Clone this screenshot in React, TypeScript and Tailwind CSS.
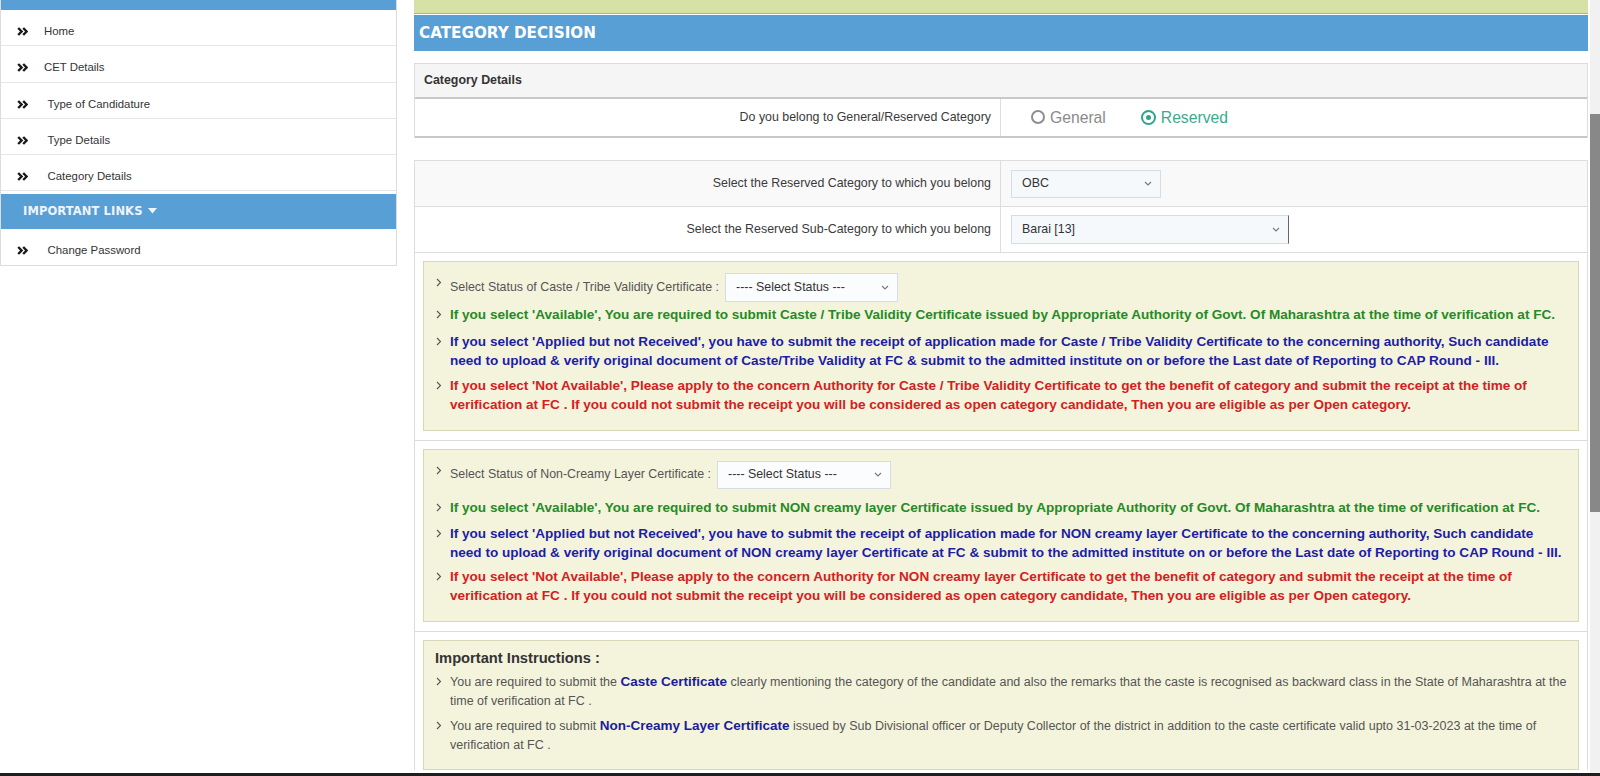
import React from "react";

function DoubleChevron() {
  return (
    <svg width="11" height="9" viewBox="0 0 11 9" className="shrink-0">
      <path d="M1.2 1 L4.6 4.5 L1.2 8 M6.2 1 L9.6 4.5 L6.2 8" fill="none" stroke="#1a1a1a" strokeWidth="2.4" />
    </svg>
  );
}

function SmallChevron() {
  return (
    <div className="h-[19.5px] w-[14px] shrink-0 flex items-center">
      <svg width="6" height="9" viewBox="0 0 6 9">
        <path d="M1 1 L4.5 4.5 L1 8" fill="none" stroke="#555" strokeWidth="1.1" />
      </svg>
    </div>
  );
}

function SelectBox({ value, className }: { value: string; className: string }) {
  return (
    <div
      className={`flex items-center justify-between border border-[#d8dde3] bg-[#f6f9fc] pl-[10px] pr-[8px] text-[12.4px] text-[#333] ${className}`}
    >
      <span>{value}</span>
      <svg width="8" height="5" viewBox="0 0 8 5">
        <path d="M1 1 L4 4 L7 1" fill="none" stroke="#777" strokeWidth="1.1" />
      </svg>
    </div>
  );
}

const menu = [
  { label: "Home", indent: "ml-[16px]" },
  { label: "CET Details", indent: "ml-[16px]" },
  { label: "Type of Candidature", indent: "ml-[19.5px]" },
  { label: "Type Details", indent: "ml-[19.5px]" },
  { label: "Category Details", indent: "ml-[19.5px]" },
];

function Sidebar() {
  return (
    <aside className="w-[397px] shrink-0 self-start border-x border-b border-[#dcdcdc] bg-white">
      <div className="h-[10px] bg-[#589fd5]" />
      {menu.map((m) => (
        <div key={m.label} className="h-[36.3px] flex items-center border-b border-[#e6e6e6] pl-[16px] pt-[8px]">
          <DoubleChevron />
          <span className={`${m.indent} text-[11.4px] text-[#333]`}>{m.label}</span>
        </div>
      ))}
      <div className="mt-[3px] h-[35px] bg-[#589fd5] flex items-center pl-[22px]">
        <span className="font-['DejaVu_Sans',Verdana,sans-serif] font-bold text-[11.5px] text-[#eef4fa] tracking-[0.1px]">
          IMPORTANT LINKS
        </span>
        <svg width="9" height="6" viewBox="0 0 9 6" className="ml-[5px] mb-[2px]">
          <path d="M0 0 L9 0 L4.5 5.5 Z" fill="#eef4fa" />
        </svg>
      </div>
      <div className="h-[36px] flex items-center pl-[16px] pt-[6px]">
        <DoubleChevron />
        <span className="ml-[19.5px] text-[11.4px] text-[#333]">Change Password</span>
      </div>
    </aside>
  );
}

function NoteGreen({ children, className = "" }: { children: React.ReactNode; className?: string }) {
  return (
    <div className={`flex items-start ${className}`}>
      <SmallChevron />
      <div className="font-bold text-[13.55px] leading-[19.5px] text-[#268a26] whitespace-nowrap">{children}</div>
    </div>
  );
}
function NoteBlue({ children, className = "" }: { children: React.ReactNode; className?: string }) {
  return (
    <div className={`flex items-start ${className}`}>
      <SmallChevron />
      <div className="font-bold text-[13.55px] leading-[19.5px] text-[#1d1da6] whitespace-nowrap">{children}</div>
    </div>
  );
}
function NoteRed({ children, className = "" }: { children: React.ReactNode; className?: string }) {
  return (
    <div className={`flex items-start ${className}`}>
      <SmallChevron />
      <div className="font-bold text-[13.55px] leading-[19.5px] text-[#d42020] whitespace-nowrap">{children}</div>
    </div>
  );
}

export default function App() {
  return (
    <div className="w-[1600px] h-[776px] overflow-hidden bg-white flex flex-col font-['Liberation_Sans',Arial,sans-serif]">
      <div className="h-[773px] flex overflow-hidden">
        <Sidebar />
        <main className="ml-[17px] w-[1174px] shrink-0 flex flex-col">
          <div className="h-[14px] shrink-0 bg-[#d6e2a5] border-b border-[#a9b96f]" />
          <div className="mt-[1px] h-[36px] shrink-0 bg-[#589fd5] flex items-center pl-[5px]">
            <span className="font-['DejaVu_Sans',Verdana,sans-serif] font-bold text-[15.2px] text-white">CATEGORY DECISION</span>
          </div>

          {/* Category details panel */}
          <div className="mt-[12px] shrink-0 border-x border-t border-[#dddddd]">
            <div className="h-[35px] bg-[#f5f5f5] border-b-2 border-[#c8c8c8] flex items-center pl-[9px]">
              <span className="font-bold text-[12.4px] text-[#333]">Category Details</span>
            </div>
            <div className="h-[39px] flex border-b-2 border-[#c8c8c8]">
              <div className="w-1/2 flex items-center justify-end pr-[9px] border-r border-[#dddddd] text-[12.4px] text-[#3a3a3a]">
                Do you belong to General/Reserved Category
              </div>
              <div className="flex-1 flex items-center pl-[30px]">
                <div className="flex items-center">
                  <span className="w-[14px] h-[14px] rounded-full border-2 border-[#8e8e8e] bg-white" />
                  <span className="ml-[5px] text-[15.7px] text-[#8a8a8a]">General</span>
                </div>
                <div className="flex items-center ml-[35px]">
                  <span className="w-[15px] h-[15px] rounded-full border-[2.5px] border-[#2ea58a] bg-white flex items-center justify-center">
                    <span className="w-[5px] h-[5px] rounded-full bg-[#2ea58a]" />
                  </span>
                  <span className="ml-[5px] text-[15.7px] text-[#3aab8e]">Reserved</span>
                </div>
              </div>
            </div>
          </div>

          {/* Reserved category table */}
          <div className="mt-[22px] shrink-0 border-x border-t border-[#dddddd]">
            <div className="h-[46px] flex bg-[#f9f9f9] border-b border-[#dddddd]">
              <div className="w-1/2 flex items-center justify-end pr-[9px] border-r border-[#dddddd] text-[12.4px] text-[#3a3a3a]">
                Select the Reserved Category to which you belong
              </div>
              <div className="flex-1 flex items-center pl-[10px]">
                <SelectBox value="OBC" className="w-[150px] h-[28px]" />
              </div>
            </div>
            <div className="h-[46px] flex bg-white border-b border-[#dddddd]">
              <div className="w-1/2 flex items-center justify-end pr-[9px] border-r border-[#dddddd] text-[12.4px] text-[#3a3a3a]">
                Select the Reserved Sub-Category to which you belong
              </div>
              <div className="flex-1 flex items-center pl-[10px]">
                <SelectBox value="Barai [13]" className="w-[278px] h-[29px] border-r-[#666]" />
              </div>
            </div>
          </div>

          {/* Caste validity */}
          <div className="shrink-0 border-x border-b border-[#dddddd] px-[8px] pt-[8px] pb-[9px]">
            <div className="border border-[#d9d8b6] bg-[#f4f4dd] pl-[12px] pr-[8px] pt-[11px] pb-[15px]">
              <div className="flex items-start">
                <SmallChevron />
                <div className="flex items-center gap-[6px]">
                  <span className="text-[12.4px] text-[#555]">Select Status of Caste / Tribe Validity Certificate :</span>
                  <SelectBox value="---- Select Status ---" className="w-[173px] h-[29px] bg-[#fbfcfd]" />
                </div>
              </div>
              <NoteGreen className="mt-[3px]">
                If you select 'Available', You are required to submit Caste / Tribe Validity Certificate issued by Appropriate Authority of Govt. Of Maharashtra at the time of verification at FC.
              </NoteGreen>
              <NoteBlue className="mt-[7px]">
                If you select 'Applied but not Received', you have to submit the receipt of application made for Caste / Tribe Validity Certificate to the concerning authority, Such candidate
                <br />
                need to upload &amp; verify original document of Caste/Tribe Validity at FC &amp; submit to the admitted institute on or before the Last date of Reporting to CAP Round - III.
              </NoteBlue>
              <NoteRed className="mt-[5px]">
                If you select 'Not Available', Please apply to the concern Authority for Caste / Tribe Validity Certificate to get the benefit of category and submit the receipt at the time of
                <br />
                verification at FC . If you could not submit the receipt you will be considered as open category candidate, Then you are eligible as per Open category.
              </NoteRed>
            </div>
          </div>

          {/* Non creamy layer */}
          <div className="shrink-0 border-x border-b border-[#dddddd] px-[8px] pt-[8px] pb-[9px]">
            <div className="border border-[#d9d8b6] bg-[#f4f4dd] pl-[12px] pr-[8px] pt-[11px] pb-[15px]">
              <div className="flex items-start">
                <SmallChevron />
                <div className="flex items-center gap-[6px]">
                  <span className="text-[12.4px] text-[#555]">Select Status of Non-Creamy Layer Certificate :</span>
                  <SelectBox value="---- Select Status ---" className="w-[174px] h-[28px] bg-[#fbfcfd]" />
                </div>
              </div>
              <NoteGreen className="mt-[9.5px]">
                If you select 'Available', You are required to submit NON creamy layer Certificate issued by Appropriate Authority of Govt. Of Maharashtra at the time of verification at FC.
              </NoteGreen>
              <NoteBlue className="mt-[6px]">
                If you select 'Applied but not Received', you have to submit the receipt of application made for NON creamy layer Certificate to the concerning authority, Such candidate
                <br />
                need to upload &amp; verify original document of NON creamy layer Certificate at FC &amp; submit to the admitted institute on or before the Last date of Reporting to CAP Round - III.
              </NoteBlue>
              <NoteRed className="mt-[4px]">
                If you select 'Not Available', Please apply to the concern Authority for NON creamy layer Certificate to get the benefit of category and submit the receipt at the time of
                <br />
                verification at FC . If you could not submit the receipt you will be considered as open category candidate, Then you are eligible as per Open category.
              </NoteRed>
            </div>
          </div>

          {/* Important instructions */}
          <div className="shrink-0 border-x border-[#dddddd] px-[8px] pt-[8px]">
            <div className="border border-[#d9d8b6] bg-[#f4f4dd] pl-[12px] pr-[8px] pt-[7px] pb-[13px]">
              <div className="-ml-[1px] font-bold text-[14.7px] leading-[20px] text-[#333]">Important Instructions :</div>
              <div className="mt-[4px] flex items-start">
                <SmallChevron />
                <div className="text-[12.5px] leading-[19.5px] text-[#555] whitespace-nowrap">
                  You are required to submit the{" "}
                  <span className="font-bold text-[13.5px] text-[#1c1c9c]">Caste Certificate</span> clearly mentioning the category of the candidate and also the remarks that the caste is recognised as backward class in the State of Maharashtra at the
                  <br />
                  time of verification at FC .
                </div>
              </div>
              <div className="mt-[4px] flex items-start">
                <SmallChevron />
                <div className="text-[12.5px] leading-[19.5px] text-[#555] whitespace-nowrap">
                  You are required to submit{" "}
                  <span className="font-bold text-[13.5px] text-[#1c1c9c]">Non-Creamy Layer Certificate</span> issued by Sub Divisional officer or Deputy Collector of the district in addition to the caste certificate valid upto 31-03-2023 at the time of
                  <br />
                  verification at FC .
                </div>
              </div>
            </div>
          </div>
        </main>
        <div className="ml-[2px] w-[10px] shrink-0 flex flex-col bg-[#f1f1f1]">
          <div className="h-[114px] shrink-0" />
          <div className="h-[398px] shrink-0 bg-[#888888]" />
        </div>
      </div>
      <div className="h-[3px] bg-[#1e1e1e]" />
    </div>
  );
}
